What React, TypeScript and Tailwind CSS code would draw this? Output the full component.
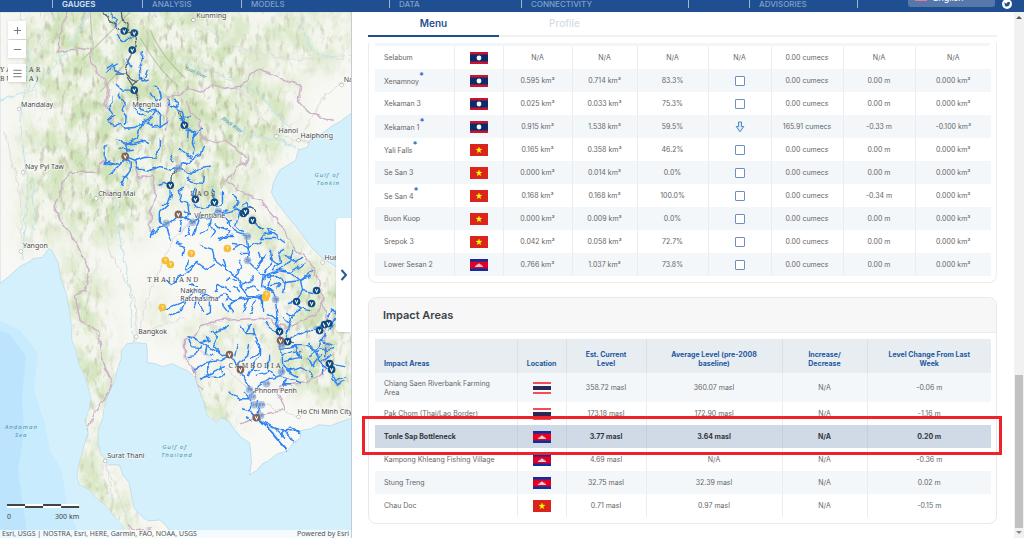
import { useState } from 'react';
import { ChevronRight, Menu as MenuIcon, Minus, Plus } from 'lucide-react';

type Country = 'laos' | 'vietnam' | 'cambodia' | 'thailand';

interface Dam {
  name: string;
  starred?: boolean;
  country: Country;
  active: string;
  total: string;
  percent: string;
  trend: 'none' | 'box' | 'down';
  flow: string;
  level: string;
  volume: string;
}

interface ImpactArea {
  name: string;
  country: Country;
  current: string;
  average: string;
  trend: string;
  change: string;
  selected?: boolean;
}

const NAV = [
  { label: 'GAUGES', width: 'w-[90px]', active: true },
  { label: 'ANALYSIS', width: 'w-[99px]' },
  { label: 'MODELS', width: 'w-[148px]' },
  { label: 'DATA', width: 'w-[132px]' },
  { label: 'CONNECTIVITY', width: 'w-[167px]' },
  { label: '', width: 'w-[61px]' },
  { label: 'ADVISORIES', width: 'w-[109px] border-r' },
];

const DAMS: Dam[] = [
  { name: 'Selabum', country: 'laos', active: 'N/A', total: 'N/A', percent: 'N/A', trend: 'none', flow: '0.00 cumecs', level: 'N/A', volume: 'N/A' },
  { name: 'Xenamnoy', starred: true, country: 'laos', active: '0.595 km³', total: '0.714 km³', percent: '83.3%', trend: 'box', flow: '0.00 cumecs', level: '0.00 m', volume: '0.000 km³' },
  { name: 'Xekaman 3', country: 'laos', active: '0.025 km³', total: '0.033 km³', percent: '75.3%', trend: 'box', flow: '0.00 cumecs', level: '0.00 m', volume: '0.000 km³' },
  { name: 'Xekaman 1', starred: true, country: 'laos', active: '0.915 km³', total: '1.538 km³', percent: '59.5%', trend: 'down', flow: '165.91 cumecs', level: '-0.33 m', volume: '-0.100 km³' },
  { name: 'Yali Falls', starred: true, country: 'vietnam', active: '0.165 km³', total: '0.358 km³', percent: '46.2%', trend: 'box', flow: '0.00 cumecs', level: '0.00 m', volume: '0.000 km³' },
  { name: 'Se San 3', country: 'vietnam', active: '0.000 km³', total: '0.014 km³', percent: '0.0%', trend: 'box', flow: '0.00 cumecs', level: '0.00 m', volume: '0.000 km³' },
  { name: 'Se San 4', starred: true, country: 'vietnam', active: '0.168 km³', total: '0.168 km³', percent: '100.0%', trend: 'box', flow: '0.00 cumecs', level: '-0.34 m', volume: '0.000 km³' },
  { name: 'Buon Kuop', country: 'vietnam', active: '0.000 km³', total: '0.009 km³', percent: '0.0%', trend: 'box', flow: '0.00 cumecs', level: '0.00 m', volume: '0.000 km³' },
  { name: 'Srepok 3', country: 'vietnam', active: '0.042 km³', total: '0.058 km³', percent: '72.7%', trend: 'box', flow: '0.00 cumecs', level: '0.00 m', volume: '0.000 km³' },
  { name: 'Lower Sesan 2', country: 'cambodia', active: '0.766 km³', total: '1.037 km³', percent: '73.8%', trend: 'box', flow: '0.00 cumecs', level: '0.00 m', volume: '0.000 km³' },
];

const AREAS: ImpactArea[] = [
  { name: 'Chiang Saen Riverbank Farming Area', country: 'thailand', current: '358.72 masl', average: '360.07 masl', trend: 'N/A', change: '-0.06 m' },
  { name: 'Pak Chom (Thai/Lao Border)', country: 'thailand', current: '173.18 masl', average: '172.90 masl', trend: 'N/A', change: '-1.16 m' },
  { name: 'Tonle Sap Bottleneck', country: 'cambodia', current: '3.77 masl', average: '3.64 masl', trend: 'N/A', change: '0.20 m', selected: true },
  { name: 'Kampong Khleang Fishing Village', country: 'cambodia', current: '4.69 masl', average: 'N/A', trend: 'N/A', change: '-0.36 m' },
  { name: 'Stung Treng', country: 'cambodia', current: '32.75 masl', average: '32.39 masl', trend: 'N/A', change: '0.02 m' },
  { name: 'Chau Doc', country: 'vietnam', current: '0.71 masl', average: '0.97 masl', trend: 'N/A', change: '-0.15 m' },
];

const AREA_HEADS = [
  'Impact Areas',
  'Location',
  'Est. Current Level',
  'Average Level (pre-2008 baseline)',
  'Increase/ Decrease',
  'Level Change From Last Week',
];

// Map geometry, one polyline per entry
const LAND =
  'M0 12H352V112L340 121L331 126L322 133L310 139L307 147L298 150L295 160L287 165L279 170L273 182L271 192L276 202L284 212L291 221L300 232L311 247L322 258L335 266L342 275L352 285V417L340 421L330 425L318 424L310 428L299 430L300 437L293 442L287 450L277 453L268 460L262 463L256 470L249 474L251 462L250 448L249 442L240 436L234 429L228 420L221 417L216 421L207 415L205 408L203 400L199 390L195 377L187 370L180 367L172 363L162 366L155 363L147 362L147 350L146 343L135 342L127 343L121 350L121 358L118 366L115 378L108 394L103 410L103 416L98 430L98 442L100 452L104 457L108 464L119 464L123 474L129 482L131 494L134 508L142 516L148 520L160 519L165 524L169 529L168 537H128L122 524L113 514L105 504L97 498L88 488L79 484L77 474L79 463L83 448L88 432L85 420L89 408L91 398L88 386L84 374L79 364L76 350L72 340L71 322L69 308L66 292L61 280L58 262L52 250L49 248L42 257L34 258L28 262L20 266L10 275L0 283Z';

const RIVERS = [
  '110,14 117,20 115,26', '117,36 121,41 129,37 132,38', '143,52 142,60 138,67 139,75 142,82 148,80', '147,70 145,76 139,77',
  '106,68 112,64 115,71 122,74', '118,64 113,66 107,72', '116,84 122,90 132,90', '154,85 160,92 161,98 155,101 150,93', '133,66 128,63 126,60',
  '112,95 112,103 108,108 112,115 108,120 114,126 122,124 126,128 135,127 142,122 150,118 156,110 148,111 140,108',
  '119,95 124,103 122,110 127,116 126,124', '156,110 160,117 160,126 167,122', '160,126 153,127', '152,118 147,122 154,125',
  '168,98 170,106 176,108 180,103 174,100', '170,106 181,112 184,122 188,130 194,135 202,128', '184,122 178,116 190,116', '188,130 187,140',
  '142,122 140,130 138,138 130,142 127,145 125,156', '118,139 125,144 134,143 142,141 148,143', '108,120 116,116', '133,107 139,112 145,116',
  '108,145 104,148 104,155 106,160 104,163 115,165', '104,163 110,162 118,165 125,158', '122,186 125,178 130,170 130,162 125,156', '110,174 117,168 123,160', '122,176 127,178',
  '125,156 135,160 138,168 150,170 160,166 170,169 178,167', '135,160 145,157 155,158 160,148 160,139', '178,167 190,160 195,150 192,142 194,132', '178,167 188,174 200,168 210,167', '190,160 200,155 203,146', '178,148 184,154 190,156', '133,149 125,150 120,147', '170,155 174,162', '196,130 190,133 184,130',
  '170,187 171,195 168,205 160,212 160,220 165,225 155,230 152,235', '165,225 168,235 170,240', '165,225 172,220 178,214 190,222 200,218 210,217 217,210 225,213 235,210 243,212', '159,184 165,182 170,187', '162,205 168,205', '153,229 150,236',
  '184,187 178,190 180,200 188,202 190,213 184,210', '195,188 192,195 198,199', '203,176 202,182 192,181 187,178', '210,188 215,192 214,202 208,206', '222,192 222,203 216,206', '188,214 184,218 192,222', '200,213 198,222 192,235', '210,217 208,230 200,233', '188,226 190,233 184,236', '181,220 180,230', '193,204 200,208 208,207', '209,223 214,231 210,237',
  '232,195 238,200 234,207 240,214', '225,215 230,225 236,232 247,236', '215,222 222,228 230,232 220,238', '239,214 235,225 243,232', '226,228 218,226', '241,206 246,203 250,208', '226,210 220,216', '232,220 226,222', '252,220 258,226 263,228', '220,240 226,236 233,236',
  '247,236 248,248 247,260 255,268 264,275 262,285 272,292 275,300 277,320 279,332 280,345 281,360 281,375 270,378 255,388 250,395 250,410 256,417',
  '248,248 258,243 262,235 272,233 284,242', '260,238 275,238', '247,248 238,244 232,248', '238,244 232,243', '247,252 241,252', '270,233 268,228 274,230',
  '255,268 262,260 258,252', '259,262 266,254', '264,272 272,262 270,250', '272,270 280,262 278,252 284,248', '264,275 278,270 290,272 305,262', '280,270 290,258 298,262', '290,272 300,280 312,270', '286,262 292,250', '294,264 301,258', '277,263 270,258', '283,255 290,256',
  '266,276 275,275 285,282 300,280 310,275', '285,280 283,292', '300,280 302,290 296,300 300,308 293,315 288,325 285,340', '302,290 312,292', '270,285 280,283 276,288', '296,300 288,302', '293,315 286,312', '300,308 310,310', '275,318 268,314', '272,292 266,286', '288,322 283,318',
  '176,242 185,245 183,255', '200,245 212,249 214,260 225,268 235,275 240,285 248,295 265,296 270,275', '192,265 186,270 188,260', '198,260 190,270 178,277 170,284 165,278', '225,268 222,260', '235,275 240,265 238,260', '198,263 207,269 214,264',
  '160,310 175,304 185,300 195,290 215,298 225,294 235,300 248,297 262,297', '168,315 180,310 185,300', '210,300 210,312 206,314', '222,303 228,311', '235,300 228,305 232,312', '248,297 242,312', '255,300 250,313', '230,290 218,285 214,290', '205,293 196,300 194,307', '240,285 250,280 253,275', '235,280 230,277 225,280', '262,298 262,310', '245,290 252,286 258,290', '198,300 203,310', '239,292 234,286', '229,296 224,301', '196,286 190,283',
  '188,335 200,342 208,340 206,336', '187,356 195,355 200,345', '200,342 215,350 222,355 230,354', '210,330 218,335 213,345 222,355', '228,325 215,332', '193,370 205,362 220,360 230,354', '200,378 215,370 225,365', '203,376 225,375', '230,354 236,365 243,375 250,388', '238,345 235,355', '188,340 192,346 200,347', '207,345 205,352 212,354', '212,358 206,368 208,374', '196,340 190,338', '222,372 221,365',
  '255,340 260,350 250,358', '240,325 246,333 254,333 260,345 260,355 252,365 248,375', '246,333 250,325', '268,353 268,372 255,376', '253,328 254,333', '248,344 246,356 238,364', '260,369 252,370',
  '281,365 290,370 300,366 308,370 312,376', '281,375 300,382', '281,348 295,345 300,357 283,360', '285,342 295,335 305,330 318,328 325,322 330,310', '279,332 270,328 265,322', '282,355 292,352 300,351', '275,375 270,370', '286,378 282,384 290,384', '287,370 296,376',
  '290,345 305,345 315,350 320,362 330,370 335,380 345,376', '315,350 320,340 332,345', '320,362 330,355', '320,355 312,365 307,358', '318,350 310,355', '322,364 322,372', '318,346 326,350 333,348', '312,350 309,343', '324,356 324,345', '333,364 344,366', '331,378 336,384 345,380', '328,330 335,318', '330,310 338,315', '322,340 326,333',
  '256,417 270,430 286,449', '258,418 274,434 286,448', '256,417 272,427 285,430 298,430', '285,430 293,441', '280,435 290,426 298,432', '241,408 250,410 256,417', '246,416 252,420', '228,391 240,398 250,398 244,392', '259,403 256,417', '274,428 284,437', '256,406 257,400',
];

const DARK_RIVERS = [
  '104,12 108,18 114,23 119,30 125,32', '121,12 123,22 128,25 127,32 134,33 136,45 132,51 128,62 125,74 132,85 134,91 138,98 141,107', '132,85 140,78 145,80', '115,74 125,74 136,82',
  '178,168 171,176 170,186', '252,220 263,229', '243,212 250,206 253,212', '214,202 211,192', '194,198 196,190', '178,112 184,125', '286,341 293,342',
];

const BORDERS = [
  '68,12 62,25 60,40 58,52 70,50 78,48 90,50 90,60 96,72 105,78 108,90 105,105 112,112 110,125',
  '165,130 168,118 167,96 180,95 187,88 200,92 212,85 225,88 240,86 255,70 268,72 285,80 300,85 298,100 305,110 318,115 332,120',
  '187,100 190,112 200,120 200,135 212,142 225,140 240,152 250,160 240,165 225,180 235,188 260,200 280,225 295,250 310,262 318,280 322,300 325,320 325,345 325,370 305,382 280,385 275,390 285,410 270,412 258,415 240,424',
  '104,160 98,164 98,172 70,172 62,185 55,205 60,220 75,240 85,262 90,270 85,290 75,295 80,320 98,330 103,360 112,385 103,400 95,410 88,432',
  '135,165 138,178 152,175 155,195 150,210 150,232', '275,322 268,318 255,318 220,320 200,325 195,335 185,340 185,358 192,368 200,390', '275,322 285,328 300,320 315,315 322,300', '128,524 135,530 150,528',
];

const ROADS = [
  '5,130 12,160 20,190 22,245', '20,108 40,60 45,12', '95,195 110,250 135,300 136,335', '136,335 160,325 185,318', '194,20 230,45 290,60 352,55', '194,20 200,60 240,90 275,135', '275,135 300,140 330,150',
  '138,330 150,290 172,240 190,222', '136,335 130,350 110,380 105,450 112,500', '252,392 230,370 200,350', '296,415 280,410 256,400', '105,460 120,500 130,530', '345,80 320,100 300,139',
];

const PALE_RIVERS = ['20,12 30,60 20,120 28,190 22,260', '0,100 30,90 60,60 90,12', '180,60 200,68 230,78 260,95 290,130', '115,200 120,240 130,290 133,340', '220,118 250,135 280,140 300,150', '33,180 34,230', '300,20 310,50 340,60'];

const MARKERS = [
  { fill: '#8fa9d3', points: [[178, 168], [166, 223], [192, 222], [218, 211], [247, 236], [247, 260], [275, 299], [281, 345], [281, 371], [266, 383], [249, 389], [252, 396], [254, 404], [261, 404], [260, 415]] },
  { fill: '#114a80', points: [[124, 31], [134, 33], [132, 50], [134, 90], [184, 125], [170, 185], [195, 199], [214, 202], [243, 213], [245, 211], [252, 220], [316, 290], [296, 301], [311, 303], [324, 324], [328, 323], [319, 330], [279, 331], [287, 341], [329, 363], [331, 369]] },
  { fill: '#806257', points: [[125, 156], [178, 214], [280, 340], [229, 354], [240, 369], [256, 417]] },
  { fill: '#f6bd32', points: [[165, 260], [170, 264], [191, 253], [227, 248], [162, 307], [265, 297], [266, 294]] },
];

const CITIES = [
  { name: 'Kunming', x: 196, y: 18, dot: [193, 20] },
  { name: 'Mandalay', x: 21, y: 107, dot: [19, 109] },
  { name: 'Nay Pyi Taw', x: 25, y: 169, dot: [23, 172] },
  { name: 'Chiang Mai', x: 98, y: 196, dot: [96, 198] },
  { name: 'Yangon', x: 23, y: 248, dot: [21, 251] },
  { name: 'Hanoi', x: 278, y: 133, dot: [276, 136] },
  { name: 'Haiphong', x: 300, y: 138, dot: [298, 140] },
  { name: 'Na', x: 343, y: 82, dot: [341, 85] },
  { name: 'Hué', x: 324, y: 260, dot: [322, 262] },
  { name: 'Menghai', x: 132, y: 107 },
  { name: 'Vientiane', x: 194, y: 218 },
  { name: 'Nakhon', x: 180, y: 292 },
  { name: 'Ratchasima', x: 180, y: 300 },
  { name: 'Bangkok', x: 138, y: 333, dot: [136, 336] },
  { name: 'Phnom Penh', x: 254, y: 392 },
  { name: 'Ho Chi Minh City', x: 297, y: 413, dot: [298, 416] },
  { name: 'Surat Thani', x: 107, y: 457, dot: [105, 460] },
];

function Lines({ items, stroke, width }: { items: string[]; stroke: string; width: number }) {
  return (
    <g fill="none" stroke={stroke} strokeWidth={width} strokeLinecap="round" strokeLinejoin="round" filter="url(#wiggle)">
      {items.map((points) => (
        <polyline key={points} points={points} />
      ))}
    </g>
  );
}

function BasinMap() {
  return (
    <svg viewBox="0 12 352 525" preserveAspectRatio="xMinYMin slice" className="absolute inset-0 h-full w-full" role="img" aria-label="Mekong basin map">
      <defs>
        <clipPath id="land">
          <path d={LAND} />
        </clipPath>
        <filter id="wiggle" x="0" y="0" width="352" height="540" filterUnits="userSpaceOnUse" colorInterpolationFilters="sRGB">
          <feTurbulence type="fractalNoise" baseFrequency="0.14" numOctaves="1" seed="4" result="n" />
          <feDisplacementMap in="SourceGraphic" in2="n" scale="7" xChannelSelector="R" yChannelSelector="G" />
        </filter>
        <filter id="forest" x="0" y="0" width="352" height="540" filterUnits="userSpaceOnUse" colorInterpolationFilters="sRGB">
          <feTurbulence type="fractalNoise" baseFrequency="0.06 0.04" numOctaves="4" seed="11" />
          <feColorMatrix values="0 0 0 0 0.82  0 0 0 0 0.89  0 0 0 0 0.73  3.6 0 0 0 -1.3" />
        </filter>
        <filter id="ridges" x="0" y="0" width="352" height="540" filterUnits="userSpaceOnUse" colorInterpolationFilters="sRGB">
          <feTurbulence type="fractalNoise" baseFrequency="0.2 0.09" numOctaves="3" seed="7" />
          <feColorMatrix values="0 0 0 0 0.66  0 0 0 0 0.68  0 0 0 0 0.54  0 4 0 0 -2.15" />
        </filter>
        <filter id="soft">
          <feGaussianBlur stdDeviation="12" />
        </filter>
        <mask id="hills">
          <g fill="#fff" filter="url(#soft)">
            <path d="M30 0H190L250 70L230 130L170 150L150 230L100 240L60 225L50 150L60 100L20 90Z" />
            <path d="M190 0H352V60L280 80L190 30Z" opacity="0.7" />
            <path d="M170 80L290 85L290 135L240 190L320 270L352 290V410L280 380L285 270L230 215L180 200L165 150Z" />
            <path d="M25 120L50 120L50 240L28 250Z" />
            <path d="M70 230L100 280L105 340L115 390L90 450L110 480L150 537H110L70 480L80 400L65 290Z" />
            <path d="M190 325L270 320L275 355L240 345L190 350Z" opacity="0.8" />
            <path d="M195 370L225 375L235 430L205 425Z" />
            <path d="M145 270L160 310L190 325L155 330Z" />
          </g>
        </mask>
      </defs>
      <rect y="12" width="352" height="525" fill="#d5f0fd" />
      <path d="M0 320L20 330L38 352L34 390L44 420L50 450L62 470L66 500L80 537H0Z" fill="#c9ebfe" />
      <path d="M0 330L10 334L26 356L22 396L24 430L18 470L28 537H0Z" fill="#bce5fd" />
      <path d={LAND} fill="#f8f8f4" stroke="#a9cfe0" strokeWidth="0.6" />
      <g clipPath="url(#land)">
        <g mask="url(#hills)">
          <rect y="12" width="352" height="525" fill="#f0f4e8" opacity="0.7" />
          <rect y="12" width="352" height="525" filter="url(#forest)" />
          <rect y="12" width="352" height="525" filter="url(#ridges)" opacity="0.55" />
        </g>
        <path d="M82 60L130 12M100 92L128 60M150 30Q160 55 185 78M140 38Q158 70 178 86M90 12L92 40" fill="none" stroke="#a7ae94" strokeWidth="1.2" opacity="0.6" />
        <Lines items={ROADS} stroke="#dedfdc" width={1} />
        <Lines items={PALE_RIVERS} stroke="#bfe3ec" width={1} />
        <Lines items={BORDERS} stroke="#cdb0ca" width={1.5} />
      </g>
      <Lines items={DARK_RIVERS} stroke="#596875" width={1.3} />
      <Lines items={RIVERS} stroke="#2b82f5" width={1.4} />

      <g fill="#444" stroke="#fff" strokeWidth="1" paintOrder="stroke" className="font-['Noto_Sans',sans-serif] text-[7px]">
        {CITIES.map((c) => (
          <g key={c.name}>
            <text x={c.x} y={c.y}>{c.name}</text>
            {c.dot && <circle cx={c.dot[0]} cy={c.dot[1]} r="1.6" fill="#fff" stroke="#777" strokeWidth="0.7" />}
          </g>
        ))}
      </g>
      <g fill="#555" className="font-['Noto_Serif','Liberation_Serif',serif] text-[7px] tracking-[2px]">
        <text x="0" y="72">YANMAR</text>
        <text x="0" y="81">BURMA)</text>
        <text x="147" y="281">THAILAND</text>
        <text x="190" y="196">LAOS</text>
        <text x="228" y="367">CAMBODIA</text>
      </g>
      <g fill="#4d93ab" className="font-['Noto_Sans',sans-serif] text-[6px] italic tracking-[1px]">
        <text x="314" y="177">Gulf of</text>
        <text x="316" y="185">Tonkin</text>
        <text x="5" y="428">Andaman</text>
        <text x="15" y="436">Sea</text>
        <text x="162" y="448">Gulf of</text>
        <text x="161" y="456">Thailand</text>
        <text x="184" y="69" transform="rotate(24 184 69)" className="text-[5px] tracking-normal">Yuan River</text>
        <text x="221" y="119" transform="rotate(36 221 119)" className="text-[5px] tracking-normal">Black River</text>
      </g>
      {MARKERS.map((m) =>
        m.points.map(([x, y]) => (
          <g key={`${x}-${y}`}>
            <circle cx={x} cy={y} r="3.8" fill={m.fill} opacity={m.fill === '#8fa9d3' ? 0.65 : 1} />
            {m.fill === '#f6bd32' ? (
              <path d={`M${x - 1} ${y - 1}q1 -1.6 2 0q0 .8 -1 1.2v.6m0 .8v.4`} fill="none" stroke="#fff" strokeWidth="0.8" />
            ) : m.fill === '#8fa9d3' ? (
              <path d={`M${x - 2} ${y - 1}h1.4v2h-1.4m3 0v-2h1.4v2`} fill="none" stroke="#5878ae" strokeWidth="0.6" />
            ) : (
              <path d={`M${x - 1.4} ${y - 1.4}l1.4 3l1.4 -3`} fill="none" stroke="#fff" strokeWidth="1" />
            )}
          </g>
        )),
      )}
      <g>
        <path d="M7 503h72v4h-72z" fill="#fff" />
        <path d="M7 503h18v2h-18zM25 505h18v2h-18zM43 503h18v2h-18zM61 505h18v2h-18z" fill="#444" />
      </g>
      <g fill="#444" className="font-['Noto_Sans',sans-serif] text-[7px]">
        <text x="7" y="518">0</text>
        <text x="55" y="518">300 km</text>
      </g>
    </svg>
  );
}

function Flag({ country }: { country: Country }) {
  return (
    <svg viewBox="0 0 18 12" className="mx-auto block h-3 w-[18px]" role="img" aria-label={country}>
      {country === 'laos' && (
        <>
          <rect width="18" height="12" fill="#c8152f" />
          <rect y="2.5" width="18" height="7" fill="#072d6d" />
          <circle cx="9" cy="6" r="2.4" fill="#fff" />
        </>
      )}
      {country === 'vietnam' && (
        <>
          <rect width="18" height="12" fill="#da251d" />
          <path d="M9 3L9.8 5.1H12L10.2 6.5L10.8 8.7L9 7.4L7.2 8.7L7.8 6.5L6 5.1H8.2Z" fill="#ff0" stroke="#ff0" strokeWidth="0.3" />
        </>
      )}
      {country === 'cambodia' && (
        <>
          <rect width="18" height="12" fill="#0b2ea0" />
          <rect y="2.5" width="18" height="7" fill="#e00025" />
          <path d="M5 8V6.8H6.5V5.6H8V5L9 4.2L10 5V5.6H11.5V6.8H13V8Z" fill="#dccfd6" />
        </>
      )}
      {country === 'thailand' && (
        <>
          <rect width="18" height="12" fill="#f8f8fa" />
          <path d="M0 0h18v2h-18zM0 10h18v2h-18z" fill="#ef4d58" />
          <rect y="4" width="18" height="4" fill="#2a2750" />
        </>
      )}
    </svg>
  );
}

function Trend({ dam }: { dam: Dam }) {
  if (dam.trend === 'none') return <>N/A</>;
  if (dam.trend === 'down') {
    return (
      <svg viewBox="0 0 10 12" className="mx-auto block h-3 w-2.5" role="img" aria-label="Decrease">
        <path d="M3.5 1H6.5V5.5H8.8L5 10.8L1.2 5.5H3.5Z" fill="#d5eafa" stroke="#5684bd" strokeWidth="1" strokeLinejoin="round" />
      </svg>
    );
  }
  return (
    <input
      type="checkbox"
      aria-label={`${dam.name} level`}
      className="mx-auto block h-2.5 w-2.5 appearance-none rounded-[1px] border border-[#6d8fc2] bg-white checked:bg-[#6d8fc2]"
    />
  );
}

function DamTable() {
  return (
    <section className="rounded-b-lg border border-t-0 border-[#ececec] px-1.5 pb-1.5">
      <div className="h-[3px] bg-[#f3f6f9]" />
      <table className="w-full table-fixed text-center text-[#666]">
        <colgroup>
          <col className="w-[79px]" />
          <col className="w-[49px]" />
          <col className="w-[69px]" />
          <col className="w-[65px]" />
          <col className="w-[71px]" />
          <col className="w-[63px]" />
          <col className="w-[72px]" />
          <col className="w-[72px]" />
          <col className="w-[76px]" />
        </colgroup>
        <tbody>
          {DAMS.map((d) => (
            <tr key={d.name} className="h-[23px] even:bg-[#f3f7fa] [&>*]:border-r [&>*]:border-[#e9edf2] [&>*:last-child]:border-r-0">
              <th scope="row" className="pl-[9px] text-left font-normal">
                {d.name}
                {d.starred && <sup className="text-[9px] leading-none font-bold text-[#2f6fc0]">*</sup>}
              </th>
              <td><Flag country={d.country} /></td>
              <td>{d.active}</td>
              <td>{d.total}</td>
              <td>{d.percent}</td>
              <td><Trend dam={d} /></td>
              <td>{d.flow}</td>
              <td>{d.level}</td>
              <td>{d.volume}</td>
            </tr>
          ))}
        </tbody>
      </table>
    </section>
  );
}

function ImpactCard() {
  return (
    <section className="mt-3.5 rounded-lg border border-[#e9e9e9]">
      <h2 className="rounded-t-lg border-b border-[#ececec] bg-[#f7f7f7] px-3.5 py-2 text-[11px] leading-[18px] font-semibold text-[#3d4249]">Impact Areas</h2>
      <div className="relative m-1.5">
        <table className="w-full table-fixed text-center text-[#666]">
          <colgroup>
            <col className="w-[142px]" />
            <col className="w-[49px]" />
            <col className="w-[80px]" />
            <col className="w-[136px]" />
            <col className="w-[85px]" />
            <col className="w-[124px]" />
          </colgroup>
          <thead>
            <tr className="h-[34px] bg-[#e8edf2] align-bottom text-[#2459a0]">
              {AREA_HEADS.map((h) => (
                <th key={h} scope="col" className="border-r border-[#d8e0ea] px-4 pb-[5px] font-bold first:pl-[9px] first:text-left last:border-r-0 nth-2:px-0">
                  {h}
                </th>
              ))}
            </tr>
          </thead>
          <tbody>
            {AREAS.map((a) => (
              <tr
                key={a.name}
                className={`h-[23px] first:h-[29px] [&>*]:border-r [&>*:last-child]:border-r-0 ${
                  a.selected
                    ? 'bg-[#d0d9e6] font-bold text-[#33373d] [&>*]:border-[#c5d0df]'
                    : 'odd:bg-[#f3f7fa] [&>*]:border-[#e9edf2]'
                }`}
              >
                <th scope="row" className={`pr-4 pl-[9px] text-left ${a.selected ? 'font-bold' : 'font-normal'}`}>{a.name}</th>
                <td><Flag country={a.country} /></td>
                <td>{a.current}</td>
                <td>{a.average}</td>
                <td>{a.trend}</td>
                <td>{a.change}</td>
              </tr>
            ))}
          </tbody>
        </table>
        {/* callout round the selected row */}
        <div className="pointer-events-none absolute top-[77px] -right-[12px] -left-[13px] h-[39px] border-[3px] border-[#ee2228]" />
      </div>
    </section>
  );
}

export default function App() {
  const [tab, setTab] = useState('Menu');
  const tools = [
    { label: 'Zoom in', icon: Plus, cls: '' },
    { label: 'Zoom out', icon: Minus, cls: 'mt-px' },
    { label: 'Layers', icon: MenuIcon, cls: 'mt-1.5' },
  ];

  return (
    <div className="flex min-h-screen flex-col bg-white pb-px font-[Inter,'Open_Sans',sans-serif] text-[7px] leading-[9px]">
      <header className="flex h-3 items-start overflow-hidden bg-[#1f4f91]">
        <nav className="flex h-2 flex-1 pl-[52px] text-[8px] leading-[8px]">
          {NAV.map((n) => (
            <div key={n.width} className={`flex h-2 items-start border-l border-[#9fb5d5] pl-[9px] ${n.width}`}>
              {n.label && (
                <a href="#" className={n.active ? 'font-semibold text-[#d6e2f3]' : 'font-medium text-[#819fcb]'}>{n.label}</a>
              )}
            </div>
          ))}
        </nav>
        <button type="button" className="mr-[7px] mb-[5px] flex h-5 w-[87px] items-center gap-1.5 self-end rounded-[3px] bg-[#5577aa] pl-[7px] text-[9px] text-white">
          <span className="h-2 w-3 border-b-2 border-[#df7f96] bg-white" />
          English
        </button>
        <a href="#" aria-label="Twitter" className="mr-3 -mt-px">
          <svg viewBox="0 0 10 10" className="h-2.5 w-2.5">
            <circle cx="5" cy="5" r="5" fill="#fff" />
            <path d="M2.2 3.2Q3.4 4.4 5 4.4Q5 2.9 6.3 2.8L8 3.2Q7.8 7.4 4.4 7.5L2.2 7L3.4 6.5Q2.2 5 2.2 3.2Z" fill="#1f4f91" />
          </svg>
        </a>
      </header>

      <div className="flex flex-1">
        <aside className="relative w-[352px] shrink-0 overflow-hidden border-r border-[#c5cbd2]">
          <BasinMap />
          <div className="absolute top-[9px] left-2 flex flex-col">
            {tools.map(({ label, icon: Icon, cls }) => (
              <button key={label} type="button" aria-label={label} className={`flex h-[18px] w-[18px] items-center justify-center bg-white text-[#6e6e6e] shadow-sm ${cls}`}>
                <Icon size={11} strokeWidth={2} />
              </button>
            ))}
          </div>
          <button type="button" aria-label="Expand panel" className="absolute top-[206px] right-0 flex h-[114px] w-[15px] items-center justify-center rounded-l-[4px] bg-white text-[#2c5795] shadow">
            <svg viewBox="0 0 8 12" className="h-3 w-2" fill="none" stroke="currentColor" strokeWidth="2">
              <path d="M1.5 1L6 6L1.5 11" />
            </svg>
          </button>
          <footer className="absolute inset-x-0 bottom-0 flex h-2 items-center justify-between bg-white/70 px-0.5 font-['Noto_Sans',sans-serif] text-[7px] leading-[8px] text-[#555]">
            <span>Esri, USGS | NOSTRA, Esri, HERE, Garmin, FAO, NOAA, USGS</span>
            <span>Powered by Esri</span>
          </footer>
        </aside>

        <main className="min-w-0 flex-1 pr-[17px] pb-3.5 pl-4">
          <div role="tablist" className="flex border-b-2 border-[#f1f1f2] text-[10px] leading-[12px]">
            {['Menu', 'Profile'].map((t) => (
              <button
                key={t}
                role="tab"
                type="button"
                aria-selected={tab === t}
                onClick={() => setTab(t)}
                className={`-mb-0.5 w-[131px] border-b-2 pt-[5px] pb-1.5 ${
                  tab === t ? 'border-[#1f4f91] font-semibold text-[#1f4f91]' : 'border-transparent font-medium text-[#d3dce8]'
                }`}
              >
                {t}
              </button>
            ))}
          </div>
          <div className="mt-[6px]">
            <DamTable />
            <ImpactCard />
          </div>
        </main>

        <div aria-hidden="true" className="flex w-2.5 flex-col items-center bg-[#f1f1f1] py-1">
          <svg viewBox="0 0 6 3" className="h-[3px] w-1.5"><path d="M3 0L6 3H0Z" fill="#555" /></svg>
          <div className="flex-[357]" />
          <div className="w-2 flex-[153] bg-[#c1c1c1]" />
          <svg viewBox="0 0 6 3" className="mt-[3px] h-[3px] w-1.5"><path d="M0 0H6L3 3Z" fill="#888" /></svg>
        </div>
      </div>
    </div>
  );
}
